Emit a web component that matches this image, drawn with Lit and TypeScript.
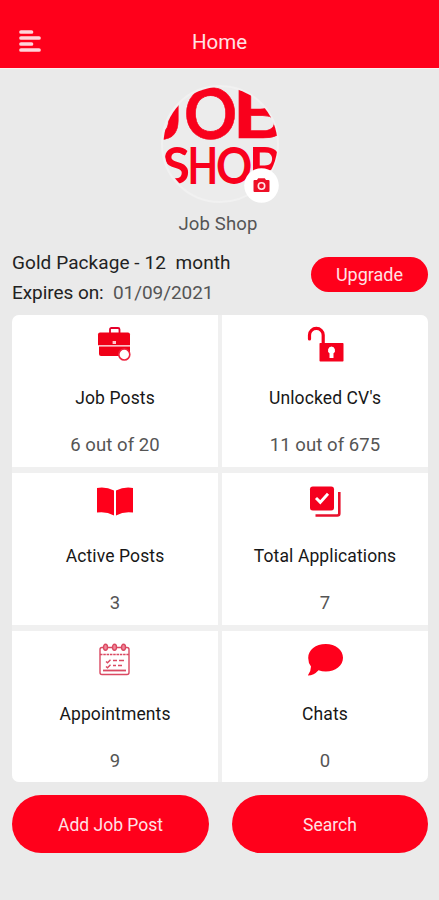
import { LitElement, html, css, svg, nothing } from "lit";
import { customElement, property } from "lit/decorators.js";

const icons: Record<string, unknown> = {
  briefcase: svg`
    <path d="M13 7V2.500Q13 1 14.500 1H21Q22.500 1 22.500 2.500V7" fill="none" stroke="#e5002b" stroke-width="1.800"/>
    <path d="M3 5.500H31Q33 5.500 33 7.500V18.300H1V7.500Q1 5.500 3 5.500Z" fill="#f00018"/>
    <path d="M2 19.600H33V29H4Q2 29 2 27Z" fill="#f00018"/>
    <rect x="15.600" y="14" width="3.400" height="3" fill="#ffc9ce"/>
    <circle cx="27.300" cy="27.500" r="5.500" fill="#fff" stroke="#ee2440" stroke-width="1.600"/>`,
  lock: svg`
    <path d="M2.500 12V8A6.800 6.500 0 0 1 16.200 8V17" fill="none" stroke="#f5001c" stroke-width="3.200" stroke-linecap="round"/>
    <rect x="12.500" y="16" width="24" height="18.500" rx=".8" fill="#f5001c"/>
    <path d="M24.500 19.500a3.700 3.700 0 0 1 2 6.700V31H22.500V26.200A3.700 3.700 0 0 1 24.500 19.500Z" fill="#fff"/>`,
  book: svg`
    <path d="M0 3Q9 1.500 17 5.500V30.500Q9 26 0 27.500ZM36 3Q27 1.500 19 5.500V30.500Q27 26 36 27.500Z" fill="#ff001b"/>`,
  check: svg`
    <path d="M32.300 7V28.500Q32.300 30.500 30.300 30.500H8.500" fill="none" stroke="#e8102c" stroke-width="2.600"/>
    <rect x="3" y="1.500" width="24" height="24" rx="2.800" fill="#f5001e"/>
    <path d="M9 13L13.300 17.300L21 8.800" fill="none" stroke="#fff" stroke-width="2.900"/>`,
  calendar: svg`
    <g fill="none" stroke="#da4962" stroke-width="1.400">
      <rect x="3" y="4.500" width="29" height="27" rx="2"/>
      <path d="M3 11.500H32" stroke-dasharray="2.500 .8"/>
      <path d="M6 27.500H29" stroke-width="1.800"/>
      <path d="M9 18.500l1.500 1.300l3-3M9 23.500l1.500 1.300l3-3"/>
      <path d="M16 17.500H20M22 17.500H27M16 22.500H19M21 22.500H25" stroke-width="1.600"/>
      <ellipse cx="8.500" cy="4.300" rx="2" ry="3" fill="#f08a9b"/>
      <ellipse cx="17.500" cy="4.300" rx="2" ry="3" fill="#f08a9b"/>
      <ellipse cx="26.500" cy="4.300" rx="2" ry="3" fill="#f08a9b"/>
    </g>`,
  chat: svg`
    <path d="M18.800 1C28.500 1 36 7 36 14.700S28.500 28.500 18.800 28.500Q15 28.500 11.500 27.300Q7 32.500 .8 32.500Q4 28.500 4 23.500Q1.200 20 1.200 15C1.200 7 8.500 1 18.800 1Z" fill="#ff001c"/>`,
};

@customElement("stat-card")
class StatCard extends LitElement {
  @property() icon = "";
  @property() label = "";
  @property() value = "";

  static styles = css`
    :host { display: flex; flex-direction: column; align-items: center; background: #fff; padding-top: 12px; box-sizing: border-box; }
    .icon { width: 36px; height: 36px; flex: none; overflow: visible; }
    .label { margin-top: 24px; font-size: 17.500px; line-height: 22px; letter-spacing: .12px; color: #171717; white-space: nowrap; }
    .value { margin-top: 25px; font-size: 18.500px; line-height: 22px; letter-spacing: .08px; color: #555; white-space: nowrap; }
  `;

  render() {
    return html`
      <svg class="icon" viewBox="0 0 36 36">${icons[this.icon] ?? nothing}</svg>
      <div class="label">${this.label}</div>
      <div class="value">${this.value}</div>
    `;
  }
}

const stats = [
  ["briefcase", "Job Posts", "6 out of 20"],
  ["lock", "Unlocked CV's", "11 out of 675"],
  ["book", "Active Posts", "3"],
  ["check", "Total Applications", "7"],
  ["calendar", "Appointments", "9"],
  ["chat", "Chats", "0"],
];

@customElement("app-root")
class AppRoot extends LitElement {
  static styles = css`
    :host { display: block; height: 900px; overflow: hidden; background: #eaeaea; font-family: Roboto, sans-serif; color: #222; }
    * { box-sizing: border-box; }
    .bar { height: 68px; display: grid; grid-template-columns: 60px 1fr 60px; align-items: end; background: #ff001b; box-shadow: 0 1px 0 #fff0f0; }
    .menu { width: 22px; height: 23px; margin: 0 0 15px 19px; }
    .title { margin-bottom: 14px; text-align: center; font-size: 20.500px; line-height: 24px; color: #ffe2e5; }
    .profile { display: flex; flex-direction: column; align-items: center; padding-top: 17px; }
    .avatar { position: relative; width: 118px; height: 118px; }
    .logo { display: block; width: 118px; height: 118px; }
    .camera { position: absolute; left: 83px; top: 83px; width: 35px; height: 35px; }
    .name { margin: 10px 3px 0 0; font-size: 18.500px; line-height: 22px; letter-spacing: .15px; color: #555; }
    .plan { display: flex; justify-content: space-between; align-items: flex-start; height: 67px; margin: 13px 11px 0 12px; }
    .line { font-size: 19px; line-height: 30px; letter-spacing: .07px; white-space: pre; }
    .expiry { letter-spacing: -.06px; }
    .date { color: #555; }
    .pill { display: flex; align-items: center; justify-content: center; border: 0; padding: 0; background: #ff001b; color: #ffe2e5; font-family: inherit; font-size: 17.500px; }
    .upgrade { width: 117px; height: 35px; margin-top: 8.500px; border-radius: 18px; font-size: 18px; }
    .stats { display: grid; grid-template-columns: 206px 206px; grid-template-rows: 152px 152px 151px; gap: 6px 4px; margin: 0 11px 0 12px; border-radius: 7px; overflow: hidden; background: #f0f0f0; }
    .actions { display: grid; grid-template-columns: 197px 196px; justify-content: space-between; margin: 13px 11px 0 12px; }
    .action { height: 58px; padding-top: 2px; border-radius: 29px; }
  `;

  render() {
    return html`
      <header class="bar">
        <svg class="menu" viewBox="0 0 22 23">
          <path d="M2 2H12.500M2 8H20M2 14H12.500M2 20H20" stroke="#ffd5da" stroke-width="3.700" stroke-linecap="round"/>
        </svg>
        <div class="title">Home</div>
      </header>
      <section class="profile">
        <div class="avatar">
          <svg class="logo" viewBox="0 0 118 118">
            <defs><clipPath id="disc"><circle cx="59.500" cy="59" r="57"/></clipPath></defs>
            <circle cx="59" cy="59" r="58" fill="#ececec" stroke="#f1f1f1" stroke-width="2"/>
            <g clip-path="url(#disc)" fill="#f9001c" font-family="Lato, sans-serif" font-weight="700">
              <g font-size="70" stroke="#f9001c" stroke-width=".6">
                <text transform="translate(-9 53.500) scale(1.050 1)">J</text>
                <text transform="translate(23 53.500) scale(.94 1)">O</text>
                <text transform="translate(71 53) scale(1.250 1)">B</text>
              </g>
              <g font-size="51">
                <text transform="translate(1.500 99) scale(.98 1)">S</text>
                <text transform="translate(26.500 99) scale(.78 1)">H</text>
                <text transform="translate(55 99) scale(.88 1)">O</text>
                <text transform="translate(88 99) scale(.98 1)">P</text>
              </g>
            </g>
          </svg>
          <svg class="camera" viewBox="0 0 35 35">
            <circle cx="17.500" cy="17.500" r="17.300" fill="#fff"/>
            <path d="M10.500 12H13L14.200 10.200H20.800L22 12H24.500Q25.500 12 25.500 13V23Q25.500 24 24.500 24H10.500Q9.500 24 9.500 23V13Q9.500 12 10.500 12Z" fill="#ee1027"/>
            <circle cx="17.500" cy="18" r="3.200" fill="none" stroke="#ffe5e7" stroke-width="1.600"/>
          </svg>
        </div>
        <div class="name">Job Shop</div>
      </section>
      <section class="plan">
        <div>
          <div class="line">Gold Package - 12  month</div>
          <div class="line expiry">Expires on:  <span class="date">01/09/2021</span></div>
        </div>
        <button class="pill upgrade">Upgrade</button>
      </section>
      <section class="stats">
        ${stats.map(([icon, label, value]) => html`<stat-card .icon=${icon} .label=${label} .value=${value}></stat-card>`)}
      </section>
      <section class="actions">
        <button class="pill action">Add Job Post</button>
        <button class="pill action">Search</button>
      </section>
    `;
  }
}
